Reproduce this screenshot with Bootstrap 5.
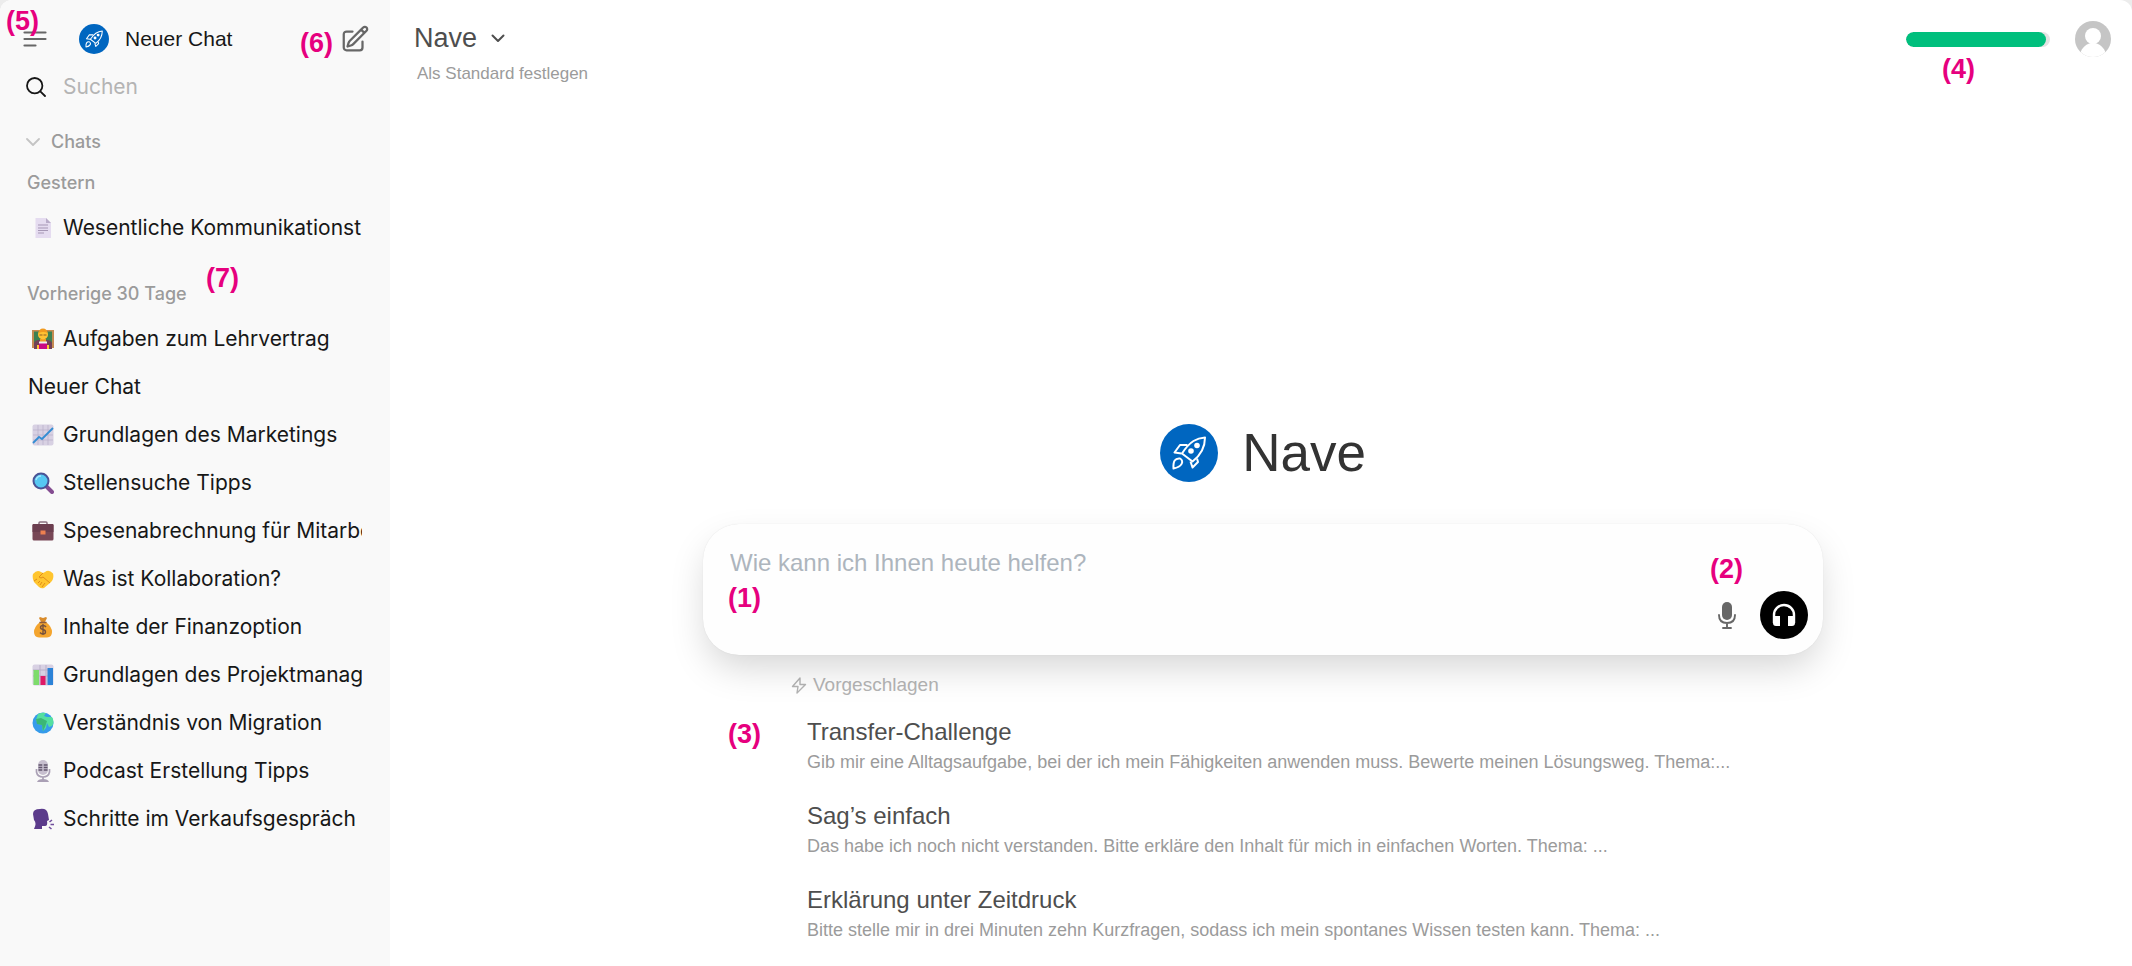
<!DOCTYPE html>
<html lang="de">
<head>
<meta charset="utf-8">
<meta name="viewport" content="width=device-width, initial-scale=1">
<title>Nave</title>
<link href="https://cdn.jsdelivr.net/npm/bootstrap@5.3.0/dist/css/bootstrap.min.css" rel="stylesheet">
<style>
  :root { --ink: #171717; --muted: #9b9b9b; --blue: #0066c0; --pink: #e6007e; --brand-font: "Liberation Sans", Arial, sans-serif; }
  html { background: #ececec; }
  body { font-family: var(--brand-font); background: transparent; }
  svg { display: block; flex: none; }
  .shell { border-radius: 12px 12px 0 0; overflow: hidden; background: #fff; }
  .side { flex: 0 0 390px; min-width: 0; background: #f9f9f9; font-family: Inter, sans-serif; color: var(--ink); }
  .side-top { height: 77px; padding: 0 20px 0 23px; }
  .side-top a { font: 500 21px/28px var(--brand-font); color: var(--ink); }
  .plain { background: none; border: 0; padding: 0; color: #676767; }
  .finder { height: 20px; margin: 0 26px; gap: 17px; }
  .finder input { font-size: 21px; line-height: 28px; color: var(--ink); }
  .finder input::placeholder { color: #b4b4b4; opacity: 1; }
  .group-toggle { margin: 32px 0 0 26px; gap: 11px; font-size: 18px; line-height: 26px; font-weight: 500; color: var(--muted); }
  .period { margin: 15px 0 0 27px; font-size: 18px; line-height: 26px; font-weight: 500; color: var(--muted); }
  .period-next { padding-top: 29px; margin-top: 0; }
  .chats { margin: 8px 28px 0 28px; }
  .chats a { height: 48px; gap: 7px; font-size: 21px; color: var(--ink); white-space: nowrap; overflow: hidden; }
  .chats svg { margin-left: 4px; margin-right: 2px; }
  .topbar { padding: 20px 20px 0 24px; }
  .model { font-size: 27px; line-height: 36px; color: #4e4e4e; gap: 14px; }
  .default-link { font-size: 17px; line-height: 24px; color: var(--muted); margin: 6px 0 0 3px; }
  .quota { width: 144px; height: 15px; border-radius: 8px; background: #e3e3e3; margin-top: 12px; }
  .quota .progress-bar { background: #00bf7d; border-radius: 8px; }
  .hero { font-size: 53px; line-height: 60px; color: #333; gap: 24px; font-weight: 400; }
  .wrap { width: 100%; max-width: 1120px; padding-bottom: 14px; }
  .composer { height: 131px; border-radius: 36px; margin-top: 41px; padding: 21px 15px 16px 27px; background: #fefefe; box-shadow: 0 0 1px rgba(0,0,0,.12), 0 16px 36px -4px rgba(0,0,0,.17); }
  .composer textarea { resize: none; border: 0; outline: 0; background: none; padding: 0; font-size: 24px; line-height: 36px; height: 40px; width: 100%; }
  .composer textarea::placeholder { color: #adb5bd; opacity: 1; }
  .call { width: 48px; height: 48px; border-radius: 50%; background: #000; color: #fff; }
  .hint { margin: 17px 0 0 88px; font-size: 19px; line-height: 26px; color: #b4b4b4; gap: 6px; }
  .ideas { padding: 2px 0 0 104px; }
  .ideas button { display: block; width: 100%; height: 84px; text-align: left; background: none; border: 0; padding: 5px 0 0; }
  .ideas strong { display: block; font-weight: 400; font-size: 24px; line-height: 34px; color: #4e4e4e; }
  .ideas span { display: block; font-size: 18px; line-height: 26px; color: var(--muted); }
  .tag { position: absolute; z-index: 2; font: 700 27px/30px var(--brand-font); color: var(--pink); }
  .tag-menu { left: 6px; top: 6px; } .tag-edit { right: 57px; top: 28px; } .tag-list { left: 206px; top: 11px; }
  .tag-quota { right: 157px; top: 54px; } .tag-input { left: 25px; top: 59px; } .tag-voice { right: 80px; top: 30px; } .tag-ideas { left: 25px; top: 21px; }
</style>
</head>
<body>
<svg width="0" height="0" class="position-absolute" aria-hidden="true">
  <symbol id="rocket" viewBox="0 0 58 58">
    <circle cx="29" cy="29" r="29" fill="#0066c0"/>
    <g fill="none" stroke="#fff" stroke-width="2" stroke-linejoin="round">
      <path d="M45 13.500C37 14 30 17 22 29.500L32.500 37.500C41 31 45 23 45 13.500Z"/>
      <path d="M27.500 21H20L14.500 28.500L21.500 29.500M37 34.500L38 38L32.500 43.500L30.500 37.500M13.500 44.500C13 37 15 34 20 34.500C24.500 37 22 43 13.500 44.500Z"/>
    </g><circle cx="37" cy="21.500" r="2.800" fill="#fff"/><circle cx="31" cy="27" r="2.800" fill="#fff"/>
  </symbol>
</svg>
<div class="shell d-flex min-vh-100">
  <aside class="side position-relative">
    <span class="tag tag-menu">(5)</span>
    <div class="side-top d-flex align-items-center">
      <button class="plain" aria-label="Menü"><svg width="24" height="18" viewBox="0 0 24 18" fill="none" stroke="currentColor" stroke-width="2.200" stroke-linecap="round"><path d="M1.500 2.500h21M1.500 9h21M1.500 15.500h11"/></svg></button>
      <a href="#" class="d-flex align-items-center text-decoration-none flex-fill ms-4 ps-2"><svg width="30" height="30" class="me-3"><use href="#rocket"/></svg><span>Neuer Chat</span></a>
      <span class="tag tag-edit">(6)</span>
      <button class="plain" aria-label="Neuer Chat"><svg width="30" height="30" viewBox="0 0 24 24" fill="none" stroke="currentColor" stroke-width="1.800" stroke-linecap="round" stroke-linejoin="round"><path d="m16.862 4.487 1.687-1.688a1.875 1.875 0 1 1 2.652 2.652L10.582 16.070a4.500 4.500 0 0 1-1.897 1.130L6 18l.8-2.685a4.500 4.500 0 0 1 1.130-1.897l8.932-8.931Zm0 0L19.500 7.125M18 14v4.750A2.250 2.250 0 0 1 15.750 21H5.250A2.250 2.250 0 0 1 3 18.750V8.250A2.250 2.250 0 0 1 5.250 6H10"/></svg></button>
    </div>
    <div class="finder d-flex align-items-center">
      <svg width="20" height="20" viewBox="0 0 20 20" fill="none" stroke="#171717" stroke-width="1.800" stroke-linecap="round"><circle cx="8.700" cy="8.700" r="7.700"/><path d="m14.300 14.300 4.700 4.700"/></svg>
      <input class="border-0 bg-transparent p-0 w-100" type="search" placeholder="Suchen" aria-label="Suchen">
    </div>
    <button class="plain group-toggle d-flex align-items-center"><svg width="14" height="9" viewBox="0 0 14 9" fill="none" stroke="#c4c4c4" stroke-width="1.800" stroke-linecap="round" stroke-linejoin="round"><path d="m1 1 6 6 6-6"/></svg>Chats</button>
    <div class="period">Gestern</div>
    <nav class="chats"><a href="#" class="d-flex align-items-center text-decoration-none"><svg width="22" height="22" viewBox="0 0 22 22"><path d="M3.500 1H14l5 5v15H3.500z" fill="#e5dcf0"/><path d="M14 1v5h5z" fill="#b9acc9"/><path d="M6 8h10M6 11h10M6 13.500h10M6 16h6" stroke="#a697b5"/></svg>Wesentliche Kommunikationst</a></nav>
    <div class="position-relative">
    <span class="tag tag-list">(7)</span>
    <div class="period period-next">Vorherige 30 Tage</div></div>
    <nav class="chats">
      <a href="#" class="d-flex align-items-center text-decoration-none"><svg width="22" height="22" viewBox="0 0 22 22"><path d="M0 2h22v18H0z" fill="#c58b52"/><path d="M2 3.500h18V18H2z" fill="#3c8152"/><path d="M2 21v-6q1-3 5-3h8q4 0 5 3v6z" fill="#704156"/><path d="M8 11h6v5H8z" fill="#ee9b22"/><circle cx="11" cy="6.500" r="5" fill="#ffc233"/><path d="M6.500 5Q7 .5 11 .5T15.500 5q-4-2-9 0" fill="#f19a1e"/><path d="M7.500 7h3m1 0h3" stroke="#8d5f26"/><path d="M7 15h8v6H7z" fill="#c90784"/><path d="M7 14.500h8" stroke="#eee" stroke-width="2"/><path d="M5 17h2v4H5zm10 0h2v4h-2z" fill="#ffc233"/></svg>Aufgaben zum Lehrvertrag</a>
      <a href="#" class="d-flex align-items-center text-decoration-none">Neuer Chat</a>
      <a href="#" class="d-flex align-items-center text-decoration-none"><svg width="22" height="22" viewBox="0 0 22 22"><rect x=".5" y=".5" width="21" height="21" rx="2" fill="#d8d1e3"/><path d="M6 1v20M11 1v20M16 1v20M1 6h20M1 11h20M1 16h20" stroke="#b9afc9" stroke-width=".7"/><path d="m1 19 6-6 3 2L21 4" fill="none" stroke="#348dd3" stroke-width="1.800"/></svg>Grundlagen des Marketings</a>
      <a href="#" class="d-flex align-items-center text-decoration-none"><svg width="22" height="22" viewBox="0 0 22 22"><path d="m14 14 6 6" stroke="#844d91" stroke-width="4" stroke-linecap="round"/><circle cx="9" cy="9" r="7.500" fill="#56c8f2" stroke="#4a5395" stroke-width="2"/><path d="M4 8q1-4 5-4" fill="none" stroke="#a2e8ff" stroke-width="1.500"/></svg>Stellensuche Tipps</a>
      <a href="#" class="d-flex align-items-center text-decoration-none"><svg width="22" height="22" viewBox="0 0 22 22"><path d="M7 6V3q0-1 1-1h6q1 0 1 1v3" fill="none" stroke="#8b7180" stroke-width="1.500"/><rect x=".5" y="4" width="21" height="16.500" rx="1.500" fill="#784756"/><path d="M.5 5q0-1 1-1h19q1 0 1 1v7H.5z" fill="#6b3e4f"/><path d="M8.500 10.500h5v4h-5z" fill="#ee8050"/></svg>Spesenabrechnung für Mitarbe</a>
      <a href="#" class="d-flex align-items-center text-decoration-none"><svg width="22" height="22" viewBox="0 0 22 22"><path d="M1 6q4-5 8-2l2 1 2-1q4-3 8 1.500Q22.500 11 18 15l-6 5q-3 1-5-1l-5-5Q0 10 1 6z" fill="#ffc52f"/><path d="m11 5-4 4q2 2 4 0l7 6M8 13l-2 2m4-1-2 3m5-2-3 4M2 13l3-2" fill="none" stroke="#e18d1a"/></svg>Was ist Kollaboration?</a>
      <a href="#" class="d-flex align-items-center text-decoration-none"><svg width="22" height="22" viewBox="0 0 22 22"><path d="m8 1 3 1 3-1 1 1-2 4H9L7 2z" fill="#d98c2c"/><path d="M8 6h6q6 5 6 10 0 5-5 5.500H7Q2 21 2 16 2 11 8 6" fill="#f4a52f"/><path d="M7.500 6.500h7" stroke="#8d5b3c" stroke-width="1.500"/><path d="M14 11q-1-1.500-3-1.500-2.500 0-2.500 2 0 1.500 2.500 2t2.500 2.500q0 2-2.500 2-2 0-3-1.500M11 8v11" fill="none" stroke="#76513c" stroke-width="1.400"/></svg>Inhalte der Finanzoption</a>
      <a href="#" class="d-flex align-items-center text-decoration-none"><svg width="22" height="22" viewBox="0 0 22 22"><rect x=".5" y=".5" width="21" height="21" rx="2" fill="#d8d1e3"/><path d="M8 1v20M14 1v20M1 6h20M1 12h20" stroke="#b9afc9"/><path d="M1.500 6H7v15H1.500z" fill="#7ddc6b"/><path d="M8.500 12h5v9h-5z" fill="#df1966"/><path d="M15.500 4H21v17h-5.500z" fill="#2c83d7"/></svg>Grundlagen des Projektmanag</a>
      <a href="#" class="d-flex align-items-center text-decoration-none"><svg width="22" height="22" viewBox="0 0 22 22"><circle cx="11" cy="11" r="10.500" fill="#369bea"/><path d="M6 2q4-2 8-1l-2 3 3 1 5 0q3 5 0 9l-3 1-2-4-1 5-3 3-1-6-4-1-2-4z" fill="#55dfa0"/><path d="m4 7 5-1 6 3-2 6-2 4-1-6-5-1z" fill="#3bb775"/></svg>Verständnis von Migration</a>
      <a href="#" class="d-flex align-items-center text-decoration-none"><svg width="22" height="22" viewBox="0 0 22 22"><rect x="6" y="0" width="10" height="15" rx="5" fill="#c7bfcf"/><path d="M6.500 5h9M6.500 7.500h9M6.500 10h9" stroke="#61566c" stroke-width="1.300"/><path d="M11 2v11" stroke="#c7bfcf" stroke-width="1.500"/><path d="M4.500 9v3q1 5 6.500 5t6.500-5V9M11 17v3" fill="none" stroke="#aaa0b5" stroke-width="1.700"/><path d="M5 22q1-3 6-3t6 3z" fill="#aaa0b5"/></svg>Podcast Erstellung Tipps</a>
      <a href="#" class="d-flex align-items-center text-decoration-none"><svg width="22" height="22" viewBox="0 0 22 22"><path d="M1 6Q1 1 8 1q7-1 8 5l1 6-2 1q1 5-2 5l-3 0v3H2q3-6 0-9z" fill="#5b3b8b"/><path d="m17.500 14 2.500-2M18.500 16.500H22M17 19l2.500 2" stroke="#704e9c" stroke-width="1.600"/></svg>Schritte im Verkaufsgespräch</a>
    </nav>
  </aside>
  <main class="flex-fill d-flex flex-column">
    <header class="topbar position-relative d-flex justify-content-between align-items-start">
      <div>
        <button class="plain model d-flex align-items-center">Nave <svg width="14" height="9" viewBox="0 0 14 9" fill="none" stroke="currentColor" stroke-width="2" stroke-linecap="round" stroke-linejoin="round"><path d="m1.500 1.500 5.500 5.500 5.500-5.500"/></svg></button>
        <button class="plain default-link d-block">Als Standard festlegen</button>
      </div>
      <div class="d-flex gap-4">
        <div class="progress quota" role="progressbar" aria-label="Kontingent" aria-valuenow="97" aria-valuemin="0" aria-valuemax="100"><div class="progress-bar" style="width:97%"></div></div>
        <button class="plain" aria-label="Profil"><svg width="38" height="38" viewBox="0 0 38 38"><clipPath id="av"><circle cx="19" cy="19" r="18"/></clipPath><g clip-path="url(#av)"><path fill="#c5c5c5" d="M0 0h38v38H0z"/><circle cx="19" cy="16" r="8" fill="#fff"/><path fill="#fff" d="M6 38q0-7 3-10 3-4 8-5h4q5 1 8 5 3 3 3 10z"/></g></svg></button>
      </div>
      <span class="tag tag-quota">(4)</span>
    </header>
    <section class="flex-fill d-flex flex-column align-items-center justify-content-end ps-1">
      <div class="wrap">
        <h1 class="hero d-flex justify-content-center align-items-center m-0"><svg width="58" height="58"><use href="#rocket"/></svg>Nave</h1>
        <form class="composer position-relative d-flex flex-column justify-content-between">
          <textarea placeholder="Wie kann ich Ihnen heute helfen?" aria-label="Nachricht"></textarea>
          <span class="tag tag-input">(1)</span><span class="tag tag-voice">(2)</span>
          <div class="d-flex justify-content-end align-items-center gap-4">
            <button type="button" class="plain" aria-label="Diktieren"><svg width="18" height="27" viewBox="0 0 18 27" fill="none" stroke="currentColor" stroke-width="1.900" stroke-linecap="round"><rect x="4" y="0" width="10" height="18" rx="5" fill="currentColor" stroke="none"/><path d="M1 13q0 8 8 8t8-8M9 21v5M5 26h8"/></svg></button>
            <button type="button" class="call border-0 p-0 d-flex align-items-center justify-content-center" aria-label="Anruf"><svg width="24" height="24" viewBox="0 0 24 24"><path d="M2 20V12a10 10 0 0 1 20 0v8" fill="none" stroke="#fff" stroke-width="2.400"/><path d="M1 13h7v10H4q-3 0-3-3zM16 13h7v7q0 3-3 3h-4z" fill="#fff"/></svg></button>
          </div>
        </form>
        <div class="hint d-flex align-items-center"><svg width="16" height="17" viewBox="0 0 16 17" fill="none" stroke="currentColor" stroke-width="1.400" stroke-linejoin="round"><path d="M9 1 1.500 9.500H7L6 16l8.500-8.500H9z"/></svg>Vorgeschlagen</div>
        <div class="position-relative">
          <span class="tag tag-ideas">(3)</span>
          <div class="ideas">
            <button><strong>Transfer-Challenge</strong><span>Gib mir eine Alltagsaufgabe, bei der ich mein Fähigkeiten anwenden muss. Bewerte meinen Lösungsweg. Thema:...</span></button>
            <button><strong>Sag’s einfach</strong><span>Das habe ich noch nicht verstanden. Bitte erkläre den Inhalt für mich in einfachen Worten. Thema: ...</span></button>
            <button><strong>Erklärung unter Zeitdruck</strong><span>Bitte stelle mir in drei Minuten zehn Kurzfragen, sodass ich mein spontanes Wissen testen kann. Thema: ...</span></button>
          </div>
        </div>
      </div>
    </section>
  </main>
</div>
<script src="https://cdn.jsdelivr.net/npm/bootstrap@5.3.0/dist/js/bootstrap.bundle.min.js"></script>
</body>
</html>
